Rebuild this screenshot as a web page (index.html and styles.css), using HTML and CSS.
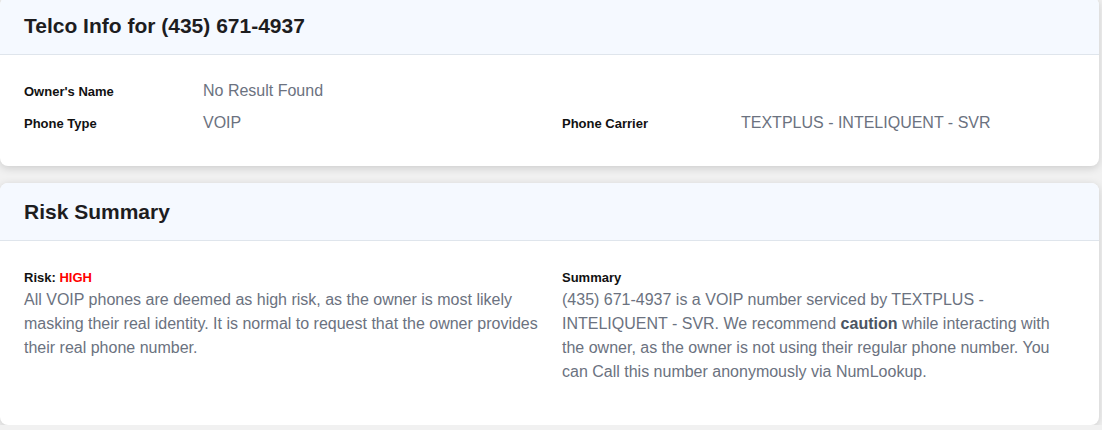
FILE: index.html
```html
<!DOCTYPE html>
<html lang="en">
<head>
    <meta charset="UTF-8">
    <link rel="stylesheet" href="styles.css">
</head>
<body>
    <div class="page">
        <div class="card">
            <div class="card-header">
                <h2>Telco Info for (435) 671-4937</h2>
            </div>
            <div class="card-body">
                <div class="info-grid">
                    <div class="info-item">
                        <span class="label">Owner's Name</span>
                        <span class="value">No Result Found</span>
                    </div>
                    <div class="info-item"></div>
                    <div class="info-item">
                        <span class="label">Phone Type</span>
                        <span class="value">VOIP</span>
                    </div>
                    <div class="info-item">
                        <span class="label">Phone Carrier</span>
                        <span class="value">TEXTPLUS - INTELIQUENT - SVR</span>
                    </div>
                </div>
            </div>
        </div>

        <div class="card">
            <div class="card-header">
                <h2>Risk Summary</h2>
            </div>
            <div class="card-body risk-body">
                <div class="risk-grid">
                    <div class="risk-col">
                        <div class="label">Risk: <span class="risk-high">HIGH</span></div>
                        <p>All VOIP phones are deemed as high risk, as the owner is most likely masking their real identity. It is normal to request that the owner provides their real phone number.</p>
                    </div>
                    <div class="risk-col">
                        <div class="label">Summary</div>
                        <p>(435) 671-4937 is a VOIP number serviced by TEXTPLUS - INTELIQUENT - SVR. We recommend <strong>caution</strong> while interacting with the owner, as the owner is not using their regular phone number. You can Call this number anonymously via NumLookup.</p>
                    </div>
                </div>
            </div>
        </div>
    </div>
</body>
</html>
```

FILE: styles.css
```css
body {
    margin: 0;
    background-color: #f1f1f1;
    font-family: 'Liberation Sans', Arial, sans-serif;
}

.page {
    margin-top: -3px;
    width: 1099px;
    display: flex;
    flex-direction: column;
    gap: 17px;
}

.card {
    background-color: #FFFFFF;
    border-radius: 8px;
    box-shadow: 0 2px 8px rgba(0, 0, 0, 0.16);
    overflow: hidden;
}

.card-header {
    background-color: #f5f9ff;
    border-bottom: 1px solid #dfe5ec;
    padding: 16px 24px;
}

.card-header h2 {
    margin: 0;
    font-size: 21px;
    line-height: 25px;
    font-weight: bold;
    color: #1d1d1f;
}

.card-body {
    padding: 24px 24px 31px;
}

.info-grid {
    display: grid;
    grid-template-columns: 538px 1fr;
    row-gap: 8px;
}

.info-item {
    display: grid;
    grid-template-columns: 179px 1fr;
    align-items: center;
    height: 24px;
}

.label {
    font-size: 13px;
    font-weight: bold;
    color: #111;
}

.value {
    font-size: 16px;
    color: #6b7280;
}

.risk-body {
    padding: 26px 24px 41px;
}

.risk-grid {
    display: grid;
    grid-template-columns: 538px 1fr;
}

.risk-col {
    padding-right: 20px;
}

.risk-col .label {
    line-height: 21px;
}

.risk-high {
    color: #ff0000;
}

.risk-col p {
    margin: 0;
    font-size: 16px;
    line-height: 24px;
    color: #6b7280;
}

.risk-col p strong {
    color: #4b5563;
}
```
